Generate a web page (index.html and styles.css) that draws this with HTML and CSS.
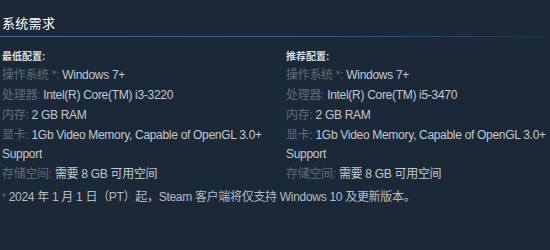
FILE: index.html
```html
<!DOCTYPE html>
<html lang="zh-CN">
<head>
<meta charset="utf-8">
<title>系统需求</title>
<link rel="stylesheet" href="styles.css">
</head>
<body>
<div class="sysreq">
  <h2 class="title">系统需求</h2>
  <div class="rule"></div>
  <div class="cols">
    <div class="col">
      <div class="head">最低配置:</div>
      <ul class="list">
        <li><span class="lbl">操作系统 *:</span> Windows 7+</li>
        <li><span class="lbl">处理器:</span> Intel(R) Core(TM) i3-3220</li>
        <li><span class="lbl">内存:</span> 2 GB RAM</li>
        <li><span class="lbl">显卡:</span> 1Gb Video Memory, Capable of OpenGL 3.0+ Support</li>
        <li><span class="lbl">存储空间:</span> 需要 8 GB 可用空间</li>
      </ul>
    </div>
    <div class="col">
      <div class="head">推荐配置:</div>
      <ul class="list">
        <li><span class="lbl">操作系统 *:</span> Windows 7+</li>
        <li><span class="lbl">处理器:</span> Intel(R) Core(TM) i5-3470</li>
        <li><span class="lbl">内存:</span> 2 GB RAM</li>
        <li><span class="lbl">显卡:</span> 1Gb Video Memory, Capable of OpenGL 3.0+ Support</li>
        <li><span class="lbl">存储空间:</span> 需要 8 GB 可用空间</li>
      </ul>
    </div>
  </div>
  <p class="note"><span class="star">*</span> 2024 年 1 月 1 日（PT）起，Steam 客户端将仅支持 Windows 10 及更新版本。</p>
</div>
</body>
</html>
```

FILE: styles.css
```css
html, body {
  margin: 0;
  padding: 0;
  overflow: hidden;
  background: #1b2838;
}
body {
  font-family: "Liberation Sans", Arial, "Noto Sans CJK SC", sans-serif;
  font-size: 12px;
  letter-spacing: -0.3px;
  color: #acb2b8;
}
.sysreq {
  padding: 15px 0 0 2px;
  width: 570px;
}
.title {
  margin: 0;
  font-size: 13px;
  font-weight: normal;
  letter-spacing: 0.3px;
  line-height: 18px;
  color: #ffffff;
}
.rule {
  height: 1px;
  margin: 3px 0 0 -2px;
  width: 545px;
  background: linear-gradient(to right, #3d6d8e 0%, #33607f 60%, #1e3347 100%);
}
.cols {
  display: grid;
  grid-template-columns: 284px 284px;
  margin-top: 13px;
}
.head {
  font-size: 10px;
  font-weight: bold;
  letter-spacing: 0;
  line-height: 14px;
  color: #dcdedf;
  margin-bottom: 2px;
}
.list {
  list-style: none;
  margin: 0;
  padding: 0;
}
.list li {
  line-height: 19px;
  margin-bottom: 1px;
  color: #c1c8ce;
}
.lbl {
  color: #606c77;
}
.note {
  margin: 3px 0 0 0;
  color: #b5bcc2;
  line-height: 19px;
}
.star {
  color: #606c77;
  font-size: 10px;
  vertical-align: top;
}
```
